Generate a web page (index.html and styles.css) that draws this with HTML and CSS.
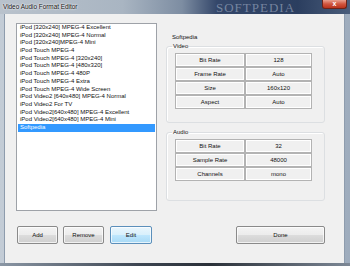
FILE: index.html
```
<!DOCTYPE html>
<html lang="en">
<head>
    <meta charset="UTF-8">
    <title>Video Audio Format Editor</title>
    <link rel="stylesheet" href="styles.css">
</head>
<body>
    <div class="window">
        <div class="titlebar">
            <span class="title">Video Audio Format Editor</span>
            <span class="mark">SOFTPEDIA</span>
            <span class="close">x</span>
        </div>
        <main class="client">
            <section class="left">
                <ul class="list">
                    <li>iPod [320x240] MPEG-4 Excellent</li>
                    <li>iPod [320x240] MPEG-4 Normal</li>
                    <li>iPod [320x240]MPEG-4 Mini</li>
                    <li>iPod Touch MPEG-4</li>
                    <li>iPod Touch MPEG-4 [320x240]</li>
                    <li>iPod Touch MPEG-4 [480x320]</li>
                    <li>iPod Touch MPEG-4 480P</li>
                    <li>iPod Touch MPEG-4 Extra</li>
                    <li>iPod Touch MPEG-4 Wide Screen</li>
                    <li>iPod Video2 [640x480] MPEG-4 Normal</li>
                    <li>iPod Video2 For TV</li>
                    <li>iPod Video2[640x480] MPEG-4 Excellent</li>
                    <li>iPod Video2[640x480] MPEG-4 Mini</li>
                    <li class="selected">Softpedia</li>
                </ul>
                <div class="buttons">
                    <button class="btn">Add</button>
                    <button class="btn">Remove</button>
                    <button class="btn focus">Edit</button>
                </div>
            </section>
            <section class="right">
                <div class="name">Softpedia</div>
                <fieldset class="group video">
                    <legend>Video</legend>
                    <div class="grid">
                        <div class="cell">Bit Rate</div><div class="cell">128</div>
                        <div class="cell">Frame Rate</div><div class="cell">Auto</div>
                        <div class="cell">Size</div><div class="cell">160x120</div>
                        <div class="cell">Aspect</div><div class="cell">Auto</div>
                    </div>
                </fieldset>
                <fieldset class="group audio">
                    <legend>Audio</legend>
                    <div class="grid">
                        <div class="cell">Bit Rate</div><div class="cell">32</div>
                        <div class="cell">Sample Rate</div><div class="cell">48000</div>
                        <div class="cell">Channels</div><div class="cell">mono</div>
                    </div>
                </fieldset>
                <button class="btn done">Done</button>
            </section>
        </main>
        <div class="bottom"></div>
    </div>
</body>
</html>
```

FILE: styles.css
```
*{
    margin: 0;
    padding: 0;
    box-sizing: border-box;
}
body{
    width: 350px;
    height: 266px;
    overflow: hidden;
    font-family: 'Liberation Sans', Arial, sans-serif;
    font-size: 6px;
    color: #111;
}
.window{
    display: flex;
    flex-direction: column;
    height: 266px;
    background: linear-gradient(90deg, #c3ccd6 0%, #b4c0cd 50%, #9eacbd 100%);
}
.titlebar{
    position: relative;
    height: 14px;
    background: linear-gradient(90deg, #b9c2cc 0%, #a9b5c2 35%, #7d8da2 52%, #34476a 62%, #2b3e5f 85%, #4a5d7b 100%);
}
.title{
    display: block;
    padding: 3px 0 0 3px;
    font-size: 6.4px;
    line-height: 8px;
    text-shadow: 0 0 2px #fff, 0 0 2px #fff;
}
.mark{
    position: absolute;
    left: 216px;
    top: 1px;
    font-family: 'Liberation Serif', serif;
    font-size: 13px;
    line-height: 13px;
    letter-spacing: 1px;
    color: rgba(205, 215, 230, 0.45);
}
.close{
    position: absolute;
    right: 3px;
    top: 0;
    width: 25px;
    height: 9px;
    border: 1px solid #6d2318;
    border-top: none;
    border-radius: 0 0 3px 3px;
    background: linear-gradient(#e8a08f, #d0553e 50%, #b8331d);
    color: #fff;
    font-weight: bold;
    font-size: 7px;
    line-height: 7px;
    text-align: center;
}
.client{
    display: flex;
    flex: 1;
    margin: 0 5px 0 4px;
    background-color: #f0f0f0;
    border-left: 1px solid #8e9cad;
    border-right: 1px solid #8e9cad;
}
.bottom{
    height: 3px;
    background: linear-gradient(90deg, #8a96a4, #3c4450 40%, #2a3038 60%, #7d8896);
}
.left{
    display: flex;
    flex-direction: column;
    padding: 9px 0 0 11px;
}
.list{
    list-style: none;
    width: 141px;
    height: 188px;
    background-color: #fff;
    border: 1px solid #9ea2a8;
    padding: 0 1px;
}
.list li{
    line-height: 7.7px;
    height: 7.7px;
    padding-left: 2px;
    white-space: nowrap;
}
.list .selected{
    background-color: #3399ff;
    color: #fff;
}
.buttons{
    display: flex;
    gap: 5px;
    margin: 15px 0 0 1px;
}
.btn{
    width: 41px;
    height: 18px;
    font-family: 'Liberation Sans', Arial, sans-serif;
    font-size: 6px;
    color: #111;
    border: 1px solid #8a8a8a;
    border-radius: 2px;
    background: linear-gradient(#f4f4f4 0%, #ececec 48%, #dcdcdc 52%, #cfcfcf 100%);
    box-shadow: inset 0 0 0 1px rgba(255, 255, 255, 0.7);
}
.btn.focus{
    width: 42px;
    margin-left: 1px;
    border-color: #5b8fbb;
    background: linear-gradient(#eaf6fd 0%, #d9f0fc 48%, #bee6fd 52%, #a7d9f5 100%);
}
.right{
    display: flex;
    flex-direction: column;
    width: 159px;
    margin-left: 9px;
    padding-top: 19px;
}
.name{
    line-height: 8px;
    padding-left: 6px;
    margin-bottom: 1px;
}
.group{
    border: 1px solid #dcdfe2;
    border-radius: 3px;
    padding: 3px 0 0 8px;
    box-shadow: inset 1px 1px 0 #fff;
}
.group legend{
    margin-left: -3px;
    padding: 0 1px;
    line-height: 8px;
    font-weight: normal;
}
.video{
    height: 81px;
}
.audio{
    height: 73px;
    margin-top: 5px;
}
.grid{
    display: grid;
    grid-template-columns: 70px 67px;
    grid-auto-rows: 14px;
}
.cell{
    display: flex;
    align-items: center;
    justify-content: center;
    border: 1px solid #b3b3b3;
    box-shadow: inset 1px 1px 0 #fff, inset -1px -1px 0 #fff;
    background-color: #f0f0f0;
}
.done{
    align-self: flex-end;
    width: 89px;
    margin-top: 25px;
}
```
